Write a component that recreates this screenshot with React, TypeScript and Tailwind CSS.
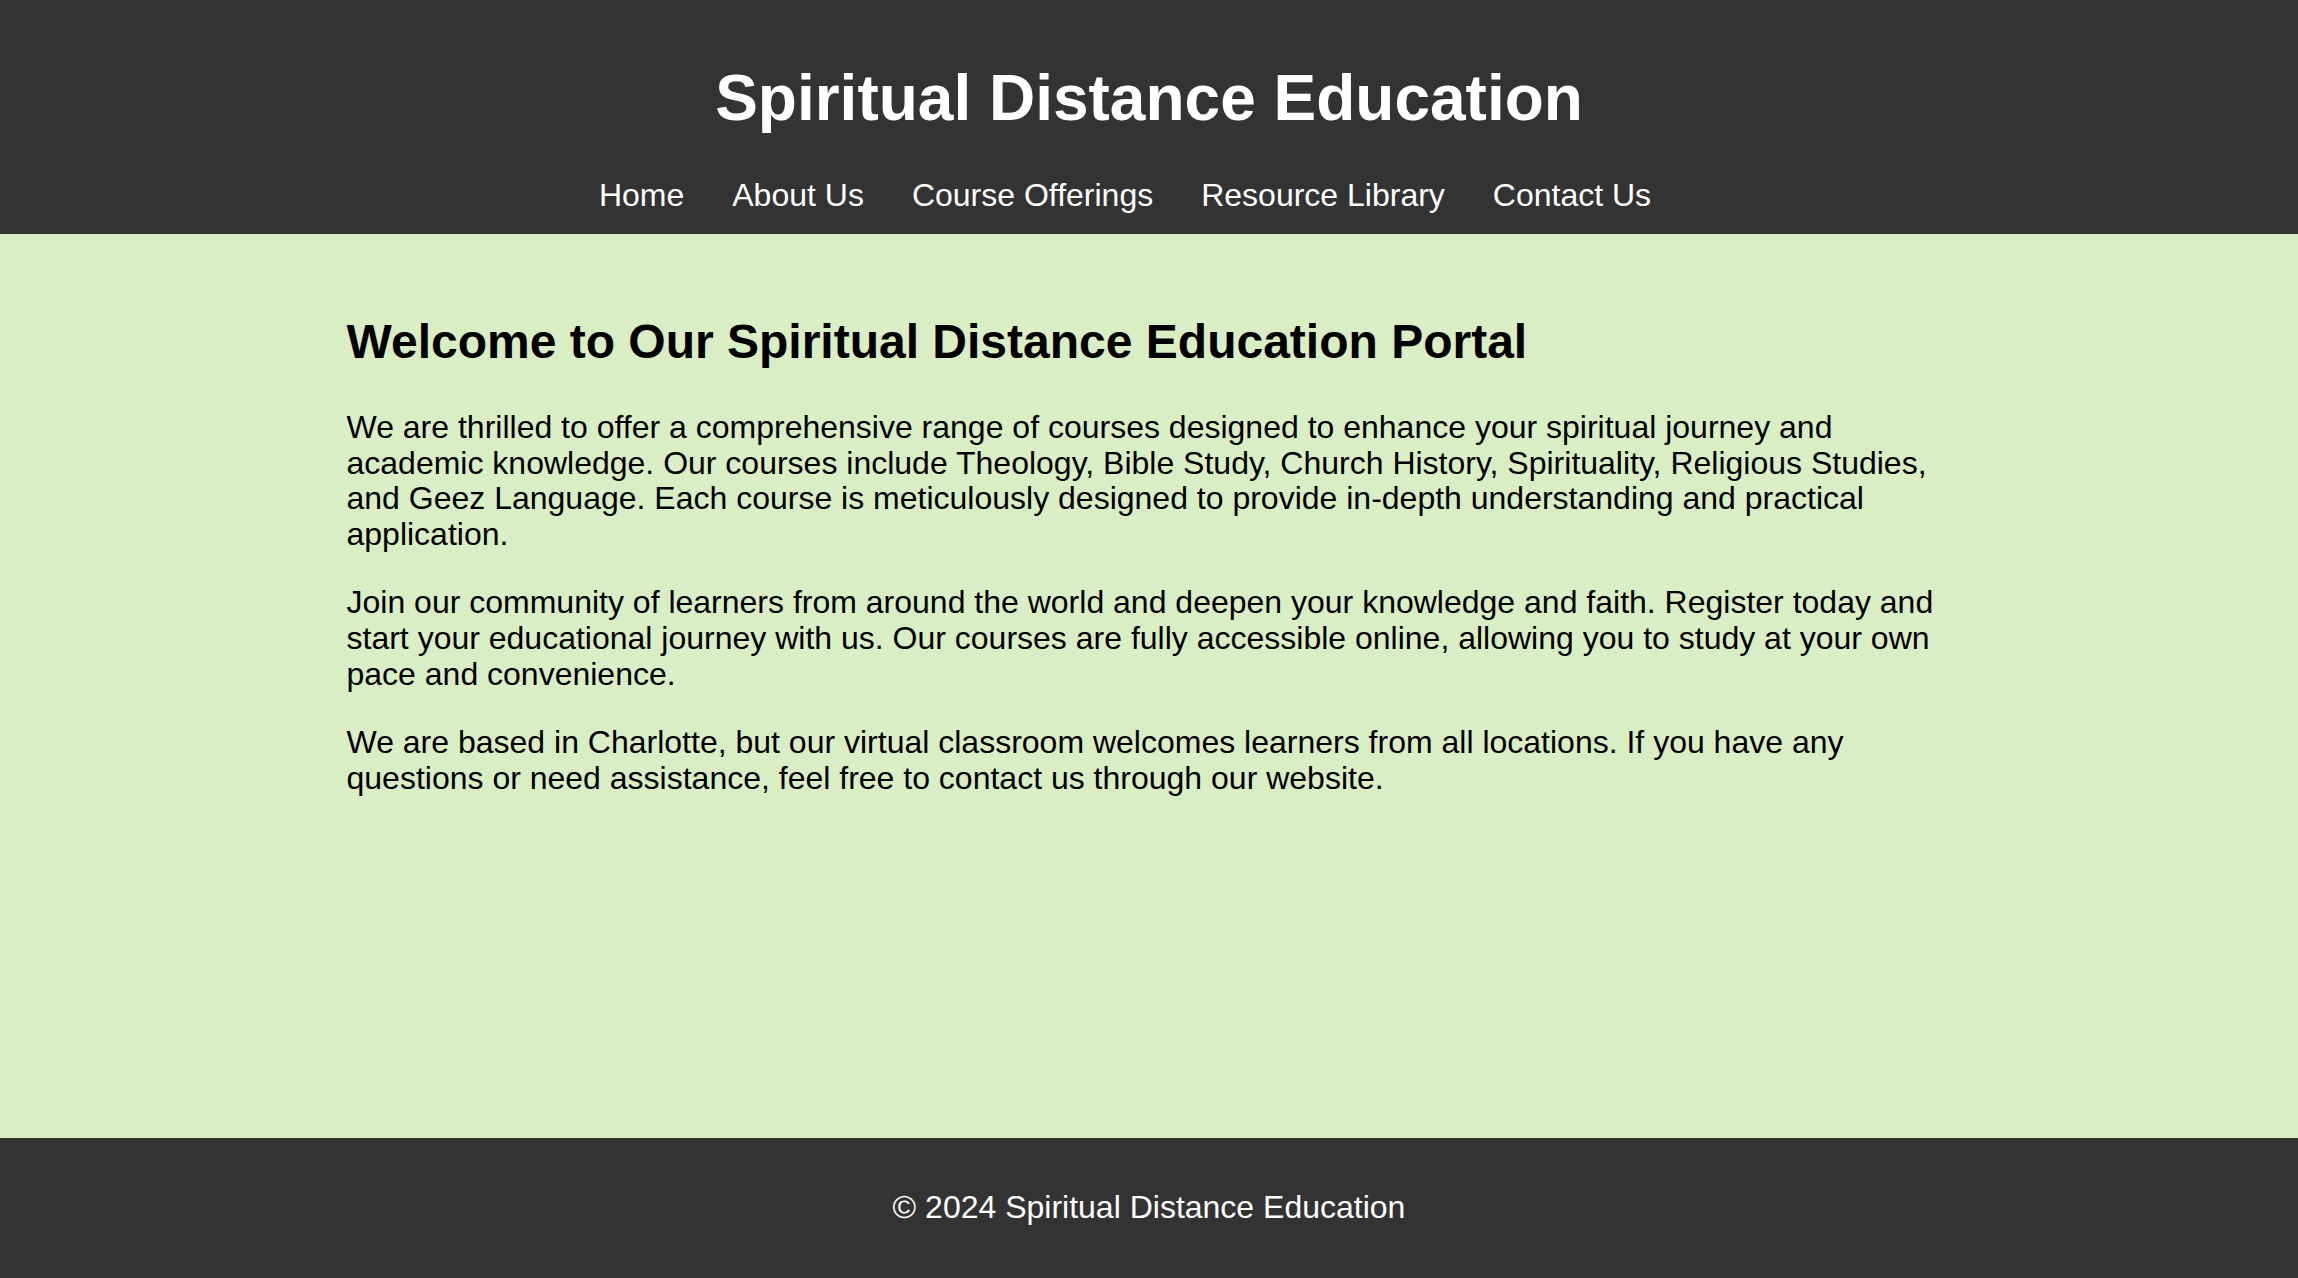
const navLinks = ["Home", "About Us", "Course Offerings", "Resource Library", "Contact Us"]

export default function App() {
  return (
    <div className="min-h-screen flex flex-col bg-[#daeec5] text-black font-['Liberation_Sans',Arial,sans-serif]">
      <header className="bg-[#333333] text-white text-center pt-[20px] pb-[21px]">
        <h1 className="text-[64px] font-bold leading-[71px] my-[43px]">Spiritual Distance Education</h1>
        <nav>
          <ul className="flex justify-center text-[32px] leading-[36px]">
            {navLinks.map((link) => (
              <li key={link} className="mr-[48px]">
                <a href="#" className="text-white">{link}</a>
              </li>
            ))}
          </ul>
        </nav>
      </header>

      <main className="flex-1 pt-[41px] pb-[40px]">
        <div className="max-w-[1605px] mx-auto">
          <h2 className="text-[48px] font-bold leading-[53px] mt-[40px] mb-[42px]">
            Welcome to Our Spiritual Distance Education Portal
          </h2>
          <div className="flex flex-col gap-[33px] text-[32px] leading-[35.6px]">
            <p>
              We are thrilled to offer a comprehensive range of courses designed to enhance your spiritual journey and
              academic knowledge. Our courses include Theology, Bible Study, Church History, Spirituality, Religious
              Studies, and Geez Language. Each course is meticulously designed to provide in-depth understanding and
              practical application.
            </p>
            <p>
              Join our community of learners from around the world and deepen your knowledge and faith. Register today
              and start your educational journey with us. Our courses are fully accessible online, allowing you to study
              at your own pace and convenience.
            </p>
            <p>
              We are based in Charlotte, but our virtual classroom welcomes learners from all locations. If you have any
              questions or need assistance, feel free to contact us through our website.
            </p>
          </div>
        </div>
      </main>

      <footer className="bg-[#333333] text-white text-center pt-[51px] pb-[53px]">
        <p className="text-[32px] leading-[36px]">© 2024 Spiritual Distance Education</p>
      </footer>
    </div>
  )
}
